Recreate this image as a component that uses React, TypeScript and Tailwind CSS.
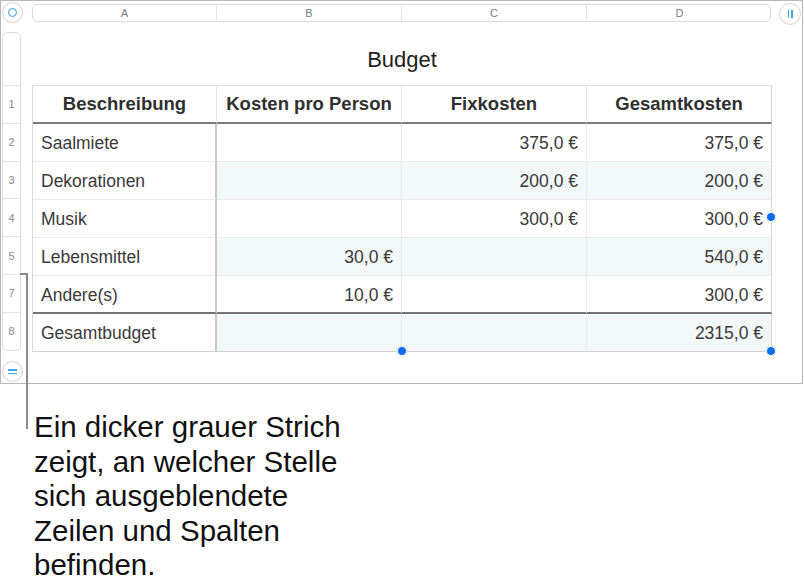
import React from 'react';

type Row = {
  num: number;
  label: string;
  perPerson?: string;
  fixed?: string;
  total: string;
};

const columns = ['A', 'B', 'C', 'D'];
const headers = ['Beschreibung', 'Kosten pro Person', 'Fixkosten', 'Gesamtkosten'];

const rows: Row[] = [
  { num: 2, label: 'Saalmiete', fixed: '375,0 €', total: '375,0 €' },
  { num: 3, label: 'Dekorationen', fixed: '200,0 €', total: '200,0 €' },
  { num: 4, label: 'Musik', fixed: '300,0 €', total: '300,0 €' },
  { num: 5, label: 'Lebensmittel', perPerson: '30,0 €', total: '540,0 €' },
  { num: 7, label: 'Andere(s)', perPerson: '10,0 €', total: '300,0 €' },
];

const footer: Row = { num: 8, label: 'Gesamtbudget', total: '2315,0 €' };

// selection handle on the table edge
const Handle = ({ className }: { className: string }) => (
  <div className={`absolute w-[10px] h-[10px] rounded-full bg-[#0a6cf2] border-[1.5px] border-white shadow-[0_0_1px_rgba(0,0,0,0.3)] ${className}`} />
);

const BodyRow = ({ row, shaded, last, isFooter }: { row: Row; shaded: boolean; last: boolean; isFooter: boolean }) => {
  const bottom = last
    ? 'border-b-2 border-b-[#747474]'
    : isFooter
      ? 'border-b border-b-[#d2d2d2]'
      : 'border-b border-b-[#ececec]';
  const fill = shaded ? 'bg-[#f2f7f7]' : 'bg-white';
  const values = [row.perPerson, row.fixed, row.total];
  return (
    <>
      <div className={`h-[38px] flex items-center pl-[8px] pt-[2px] bg-white border-r-2 border-r-[#c8c8c8] ${bottom}`}>
        {row.label}
      </div>
      {values.map((v, i) => (
        <div
          key={i}
          className={`h-[38px] flex items-center justify-end pr-[8px] pt-[2px] ${fill} ${bottom} ${i === 2 ? 'border-r border-r-[#d6d6d6]' : 'border-r border-r-[#e9e9e9]'}`}
        >
          {v ?? ''}
        </div>
      ))}
    </>
  );
};

export default function App() {
  return (
    <div className="relative w-[804px] h-[585px] bg-white overflow-hidden font-['Liberation_Sans',Arial,sans-serif]">
      {/* sheet canvas */}
      <div className="relative h-[384px] w-[803px] border border-[#b8b8b8]">
        {/* column letters */}
        <div className="h-[31px] pl-[31px] pt-[3px]">
          <div className="w-[739px] h-[18px] grid grid-cols-[184px_185px_185px_185px] rounded-[5px] border border-[#dadada] text-[11px] text-[#7c7c7c]">
            {columns.map((c, i) => (
              <div key={c} className={`flex items-center justify-center ${i < 3 ? 'border-r border-r-[#e4e4e4]' : ''}`}>
                {c}
              </div>
            ))}
          </div>
        </div>

        <div className="flex">
          {/* row numbers */}
          <div className="ml-[1px] w-[19px] h-[319px] flex flex-col rounded-[5px] border border-[#dadada] text-[11px] text-[#8a8a8a]">
            <div className="h-[52px]" />
            {[1, 2, 3, 4, 5, 7, 8].map((n) => (
              <div key={n} className="h-[38px] flex items-center justify-center border-t border-t-[#e4e4e4]">
                {n}
              </div>
            ))}
          </div>

          <div className="ml-[11px]">
            <div className="h-[53px] pt-[2px] flex items-center justify-center text-[22px] text-[#1e1e1e]">
              Budget
            </div>
            <div className="w-[740px] grid grid-cols-[184px_185px_185px_185px] border-t border-l border-t-[#dedede] border-l-[#d8d8d8] text-[17.5px] text-[#3a3a3a]">
              {headers.map((h, i) => (
                <div
                  key={h}
                  className={`h-[38px] flex items-center justify-center font-bold text-[18.5px] text-[#303030] border-b-2 border-b-[#7b7b7b] ${i === 3 ? 'border-r border-r-[#d6d6d6]' : 'border-r border-r-[#e6e6e6]'}`}
                >
                  {h}
                </div>
              ))}
              {rows.map((r, i) => (
                <BodyRow key={r.num} row={r} shaded={i % 2 === 1} last={i === rows.length - 1} isFooter={false} />
              ))}
              <BodyRow row={footer} shaded last={false} isFooter />
            </div>
          </div>
        </div>

        {/* corner controls */}
        <div className="absolute left-[1px] top-[1px] w-[21px] h-[21px] rounded-full border border-[#d2d2d2] bg-white flex items-center justify-center">
          <div className="w-[9px] h-[9px] rounded-full border-[1.5px] border-[#2ea3f2]" />
        </div>
        <div className="absolute left-[778px] top-[2px] w-[22px] h-[22px] rounded-full border border-[#d2d2d2] bg-white flex items-center justify-center gap-[2px]">
          <div className="w-[1.5px] h-[8px] bg-[#3ea6f2]" />
          <div className="w-[1.5px] h-[8px] bg-[#3ea6f2]" />
        </div>
        <div className="absolute left-[1px] top-[360px] w-[21px] h-[21px] rounded-full border border-[#d2d2d2] bg-white flex flex-col items-center justify-center gap-[2px]">
          <div className="w-[9px] h-[1.5px] bg-[#3ea6f2]" />
          <div className="w-[9px] h-[1.5px] bg-[#3ea6f2]" />
        </div>

        <Handle className="left-[765px] top-[211px]" />
        <Handle className="left-[396px] top-[345px]" />
        <Handle className="left-[765px] top-[345px]" />
      </div>

      {/* hidden-row marker and callout */}
      <div className="absolute left-[20px] top-[273px] w-[8px] h-[2px] bg-[#8a8a8a]" />
      <div className="absolute left-[26px] top-[273px] w-[2px] h-[156px] bg-[#8a8a8a]" />

      <div className="ml-[34px] mt-[26px] text-[29.5px] leading-[34.5px] text-[#111]">
        <div>Ein dicker grauer Strich</div>
        <div>zeigt, an welcher Stelle</div>
        <div>sich ausgeblendete</div>
        <div>Zeilen und Spalten</div>
        <div>befinden.</div>
      </div>
    </div>
  );
}
